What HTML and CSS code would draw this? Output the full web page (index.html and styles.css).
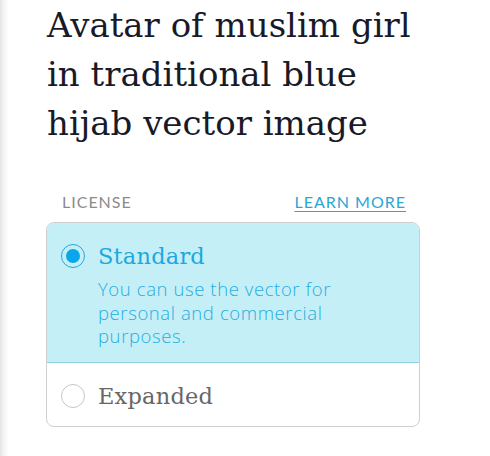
FILE: index.html
```html
<!DOCTYPE html>
<html>
<head>
<meta charset="utf-8">
<link rel="stylesheet" href="styles.css">
</head>
<body>
<div class="page">
  <h1 class="title">Avatar of muslim girl in traditional blue hijab vector image</h1>
  <div class="license-head">
    <span class="label">LICENSE</span>
    <a class="learn" href="#">LEARN MORE</a>
  </div>
  <div class="card">
    <div class="option selected">
      <span class="radio on"><span class="dot"></span></span>
      <div class="opt-body">
        <div class="opt-title">Standard</div>
        <div class="opt-desc">You can use the vector for personal and commercial purposes.</div>
      </div>
    </div>
    <div class="option">
      <span class="radio"></span>
      <div class="opt-body">
        <div class="opt-title gray">Expanded</div>
      </div>
    </div>
  </div>
</div>
</body>
</html>
```

FILE: styles.css
```css
html, body {
  margin: 0;
  padding: 0;
  background: #fff;
}
.page {
  width: 490px;
  height: 456px;
  box-sizing: border-box;
  padding: 0 70px 0 47px;
  background: linear-gradient(to right, #e4e4e4 0px, #f4f4f4 4px, #ffffff 9px);
  overflow: hidden;
}
.title {
  margin: 0;
  padding-top: 1px;
  font-family: "DejaVu Serif", serif;
  font-weight: normal;
  font-size: 34px;
  line-height: 49px;
  color: #181a28;
  width: 373px;
}
.license-head {
  display: flex;
  justify-content: space-between;
  align-items: baseline;
  margin-top: 44px;
  padding: 0 14px 0 15px;
  font-family: "Lato", sans-serif;
  font-size: 16px;
  letter-spacing: 1px;
}
.label {
  color: #8b8b8b;
}
.learn {
  color: #2ba4d6;
  text-decoration: underline;
  text-underline-offset: 3px;
}
.card {
  margin-top: 11px;
  margin-left: -1px;
  width: 372px;
  border: 1px solid #cfcfcf;
  border-radius: 8px;
  overflow: hidden;
}
.option {
  display: flex;
  align-items: flex-start;
  gap: 13px;
  padding: 21px 14px 17px 14px;
}
.option.selected {
  background: #c5eff6;
  border-bottom: 1px solid #95d3e4;
  padding-bottom: 14px;
}
.option + .option {
  padding-top: 21px;
  padding-bottom: 18px;
}
.radio {
  flex: none;
  width: 22px;
  height: 22px;
  border: 1px solid #c6c6c6;
  border-radius: 50%;
  background: #fff;
  display: flex;
  align-items: center;
  justify-content: center;
}
.radio.on {
  border-color: #25a6dc;
  background: transparent;
}
.dot {
  width: 14px;
  height: 14px;
  border-radius: 50%;
  background: #0aa6ea;
}
.opt-title {
  font-family: "DejaVu Serif", serif;
  font-size: 22.5px;
  line-height: 24px;
  letter-spacing: 0.2px;
  color: #1da8df;
}
.opt-title.gray {
  color: #676767;
}
.opt-desc {
  margin-top: 9px;
  font-family: "Open Sans", sans-serif;
  font-weight: 300;
  font-size: 18.5px;
  line-height: 23.5px;
  letter-spacing: 0.6px;
  color: #25ade2;
  width: 250px;
}
```
